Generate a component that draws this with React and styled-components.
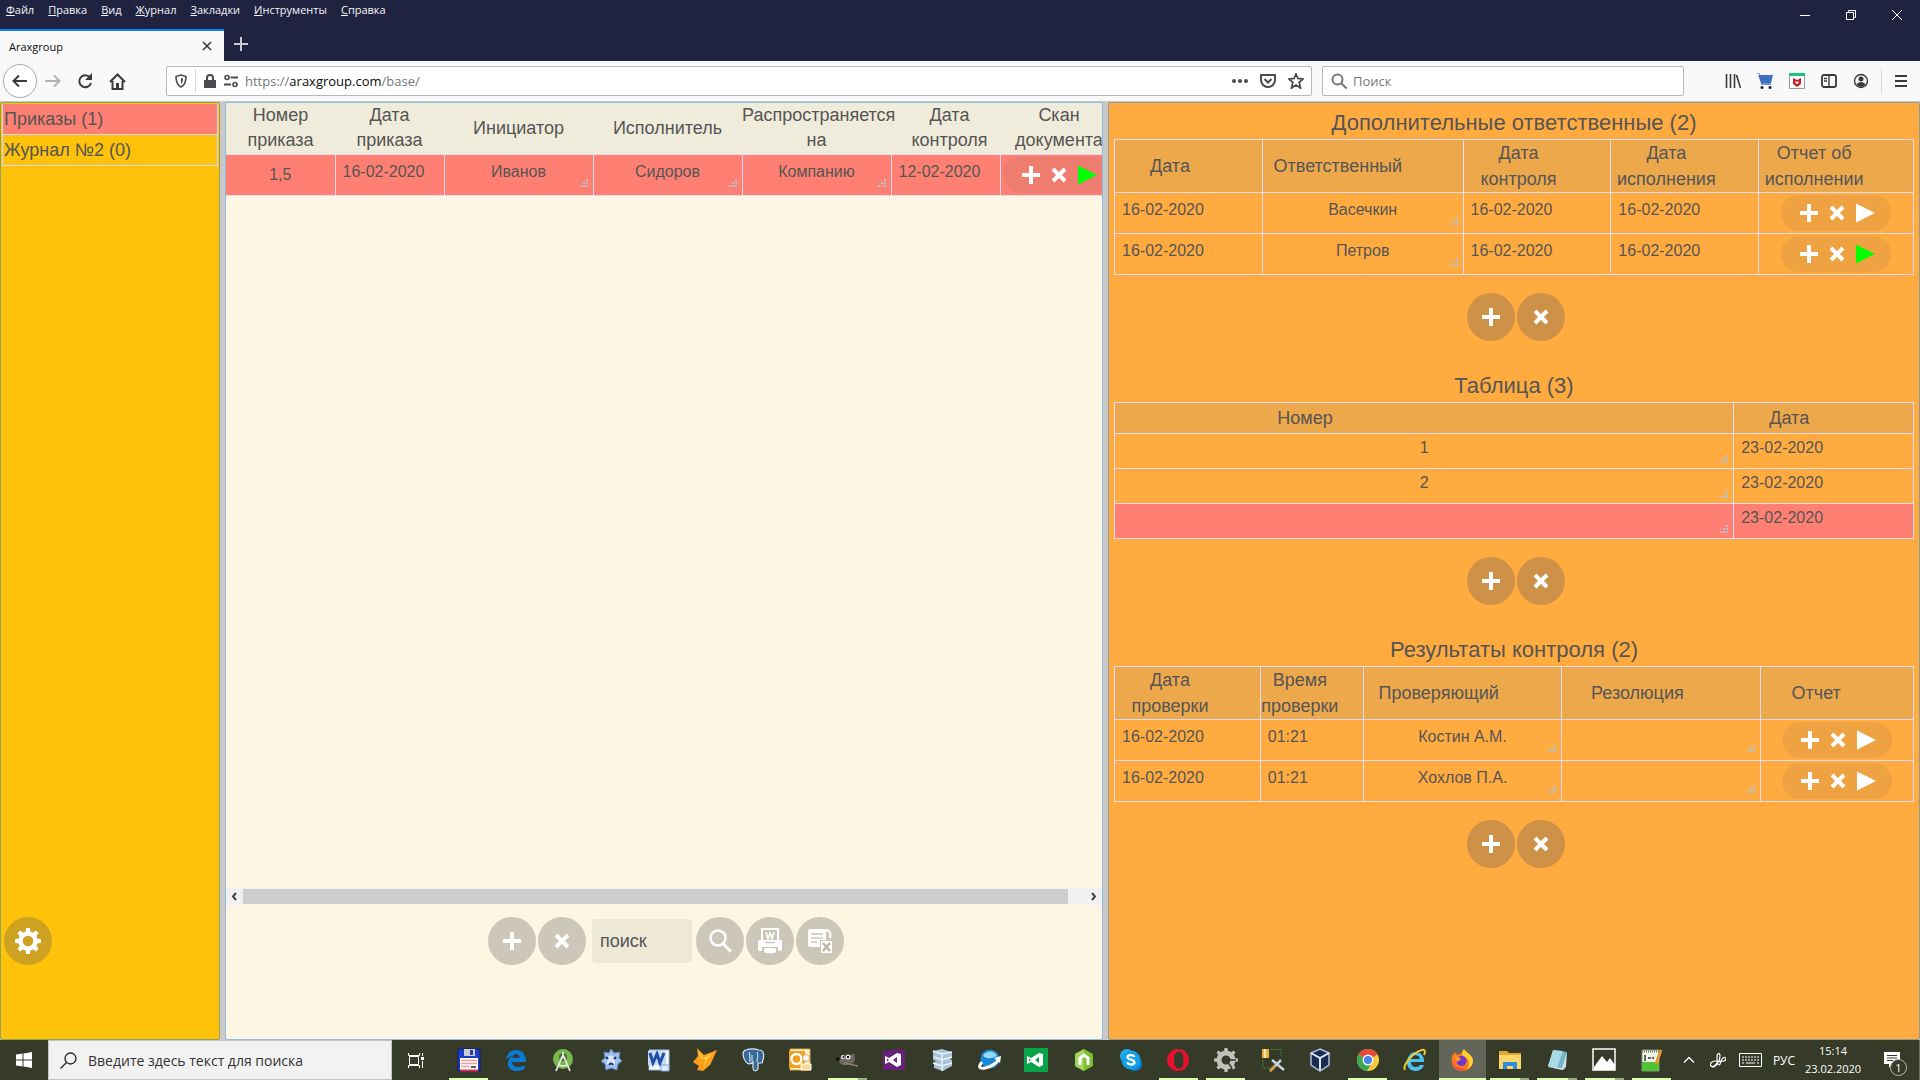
import React from 'react';
import styled, { createGlobalStyle } from 'styled-components';

const orders = [
  { number: '1,5', date: '16-02-2020', initiator: 'Иванов', executor: 'Сидоров', scope: 'Компанию', control: '12-02-2020' },
];

const responsible = [
  { date: '16-02-2020', name: 'Васечкин', control: '16-02-2020', done: '16-02-2020', loaded: false },
  { date: '16-02-2020', name: 'Петров', control: '16-02-2020', done: '16-02-2020', loaded: true },
];

const numbers = [
  { number: '1', date: '23-02-2020' },
  { number: '2', date: '23-02-2020' },
  { number: '', date: '23-02-2020', selected: true },
];

const checks = [
  { date: '16-02-2020', time: '01:21', inspector: 'Костин А.М.', resolution: '' },
  { date: '16-02-2020', time: '01:21', inspector: 'Хохлов П.А.', resolution: '' },
];

const menu = ['Файл', 'Правка', 'Вид', 'Журнал', 'Закладки', 'Инструменты', 'Справка'];

/* ---------- icons ---------- */

const Svg = ({ size = 24, box = 24, children }) => (
  <svg width={size} height={size} viewBox={`0 0 ${box} ${box}`} fill="none" aria-hidden="true">
    {children}
  </svg>
);

const PlusIcon = () => (
  <Svg size={20} box={20}><path d="M10 1v18M1 10h18" stroke="#fff" strokeWidth="4" /></Svg>
);

const CrossIcon = () => (
  <Svg size={16} box={16}><path d="M2 2l12 12M14 2L2 14" stroke="#fff" strokeWidth="4" /></Svg>
);

const PlayIcon = ({ loaded }) => (
  <Svg size={20} box={20}><path d="M1 0.500L20 10L1 19.500Z" fill={loaded ? '#00ff00' : '#fff'} /></Svg>
);

const GearIcon = () => (
  <Svg size={28} box={28}>
    <circle cx="14" cy="14" r="7.500" stroke="#fff" strokeWidth="4.500" />
    {[0, 45, 90, 135, 180, 225, 270, 315].map((a) => (
      <path key={a} d="M11.500 5.500L12 1h4l.5 4.500z" fill="#fff" transform={`rotate(${a} 14 14)`} />
    ))}
  </Svg>
);

const FindIcon = () => (
  <Svg size={24}>
    <circle cx="10" cy="9" r="7.500" stroke="#fff" strokeWidth="2.500" />
    <path d="M15 14.500l8 8" stroke="#fff" strokeWidth="3" />
  </Svg>
);

const PrintIcon = () => (
  <Svg size={26} box={26}>
    <path d="M5 12V1h16v11" stroke="#fff" strokeWidth="2" />
    <path d="M9 4l2 7 2-6 2 6 2-7" stroke="#fff" strokeWidth="1.500" />
    <path d="M3 12h20a2 2 0 0 1 2 2v7a2 2 0 0 1-2 2h-2v-4H5v4H3a2 2 0 0 1-2-2v-7a2 2 0 0 1 2-2z" fill="#fff" />
    <path d="M8 14.500h10" stroke="#cdc7b9" strokeWidth="1.500" />
    <rect x="7" y="20" width="12" height="5" rx="2" fill="#fff" />
  </Svg>
);

const SheetIcon = () => (
  <Svg size={26} box={26}>
    <path d="M3 1h14l2 2v9h-6v7H3a2 2 0 0 1-2-2V3a2 2 0 0 1 2-2z" fill="#fff" />
    <path d="M18 2c5 0 6 3 5 8" stroke="#fff" strokeWidth="2" />
    <path d="M4 6h12M4 10h12M4 14h6" stroke="#cdc7b9" strokeWidth="1.500" />
    <rect x="14" y="13" width="11" height="12" rx="1" fill="#fff" />
    <path d="M16 15l7 8M23 15l-7 8" stroke="#b9b3a6" strokeWidth="2.500" />
  </Svg>
);

const Grip = styled.svg`
  position: absolute;
  right: 4px;
  bottom: ${(p) => (p.$low ? 4 : 7)}px;
  pointer-events: none;
`;

const ResizeGrip = ({ low }) => (
  <Grip $low={low} width="9" height="9" viewBox="0 0 9 9" fill="#b9c0c4" aria-hidden="true">
    <path d="M6 0h2v2H6zM3 3h2v2H3zM6 3h2v2H6zM0 6h2v2H0zM3 6h2v2H3zM6 6h2v2H6z" />
  </Grip>
);

const Arrow = ({ flip }) => (
  <Svg size={9} box={9}><path d={flip ? 'M3 1l3 3.500L3 8' : 'M6 1L3 4.500L6 8'} stroke="#444" strokeWidth="2" /></Svg>
);

/* ---------- taskbar icons ---------- */

const apps = [
  {
    name: 'Total Commander', open: true,
    art: (
      <>
        <path d="M1 1h21l1 1v21H1z" fill="#1c3ec4" stroke="#0d1f86" />
        <path d="M7 1h11v7H7z" fill="#c8cdd6" /><path d="M13 2h3v5h-3z" fill="#2a3f9c" />
        <path d="M3 10h18v13H3z" fill="#fff" />
        <path d="M4 12.500h16M4 15.500h16M4 18.500h9" stroke="#f29b9b" strokeWidth="1.500" />
        <path d="M3 21.500h18v2H3z" fill="#d83050" /><path d="M14 18h5v2h-5z" fill="#555" />
      </>
    ),
  },
  {
    name: 'Edge',
    art: <path d="M2 12C3 5 7 2 12.500 2 19 2 22 7 22 14H8c.3 4 3 5 6.500 5 2.500 0 4.500-.8 6-1.700V21c-2 1.300-4.500 2-7.500 2C6.500 23 3.500 19 4 14.500c.3-3 2-5 4.500-6.200C5.500 8.500 3.300 10 2 12zm6.200-2.200h7.600C15.500 7.500 14.500 6 12.300 6 10 6 8.700 7.500 8.200 9.800z" fill="#0a7cd8" />,
  },
  {
    name: 'Android Studio',
    art: (
      <>
        <circle cx="12" cy="11" r="10" fill="#78b84a" />
        <circle cx="12" cy="9" r="4" fill="#4b6b45" />
        <path d="M12 4v4M11 9L5 23M13 9L19 23M8 17q4 2 8 0" stroke="#e4e8e4" strokeWidth="1.800" />
        <circle cx="12" cy="9" r="1.800" fill="#e4e8e4" />
      </>
    ),
  },
  {
    name: 'SQL Server',
    art: (
      <>
        <path d="M12 1l3 4 6-1-1 6 3 3-4 3-1 6-6-2-5 2-1-6-4-3 4-3-1-6 5 1z" fill="#9fc0ee" stroke="#5d86c8" />
        <path d="M8 9q4-3 8 0v7q-4 3-8 0z" fill="#d6e5fb" />
        <path d="M7 9l2 2M17 9l-2 2M10 17q2-3 4 0" stroke="#17345f" strokeWidth="2" />
      </>
    ),
  },
  {
    name: 'Word',
    art: (
      <>
        <path d="M3 2h20v20H3z" fill="#f4f8ff" stroke="#9db9e2" /><path d="M2 3h18v14H2z" fill="#c4daf5" />
        <path d="M4 5l3 10 4-9 3 9 4-10" stroke="#1d4fa8" strokeWidth="3" />
        <path d="M15 17h8v6h-8z" fill="#dfeaf8" stroke="#7ea3d6" />
      </>
    ),
  },
  {
    name: 'FoxPro',
    art: (
      <>
        <path d="M4 0l7 7 13-5-4 9-3 6-7 6-6-1 2-4-6-4 5-6z" fill="#ff9d1c" />
        <path d="M5 2l5 8 10-5-6 7-3 8 1-9-5-1z" fill="#ffd23c" />
      </>
    ),
  },
  {
    name: 'PostgreSQL',
    art: (
      <>
        <path d="M5 2c5-2 10-1 13 0 5 0 6 5 3 13h-4v6c-2 3-5 2-5-1v-6c-2 2-5 3-7 0C1 8 1 3 5 2z" fill="#35699a" stroke="#dce6ee" strokeWidth="1.200" />
        <path d="M8 4c2 3 0 7 1 10M16 4c2 3 0 6 0 10M11 7v6" stroke="#cddbe6" strokeWidth="1.200" />
      </>
    ),
  },
  {
    name: 'Outlook',
    art: (
      <>
        <path d="M2 1h20v21H2z" fill="#fff3d6" stroke="#e0a437" /><path d="M1 3h16v17H1z" fill="#f0a01e" />
        <circle cx="8.500" cy="11" r="5" stroke="#fff" strokeWidth="2.500" />
        <circle cx="18" cy="10" r="3.500" fill="#fff" stroke="#e0a437" /><path d="M13 16h10v6H13z" fill="#fbd98e" stroke="#fff" />
      </>
    ),
  },
  {
    name: 'GIMP', open: true, many: true,
    art: (
      <>
        <path d="M2 11c3-3 6-1 9-1 3-2 6-5 9-4-1 5 1 7-2 9-5 3-11 3-13 0z" fill="#6d6961" />
        <circle cx="8" cy="9" r="2" fill="#f4f4f4" /><circle cx="13" cy="9" r="2.500" fill="#f4f4f4" />
        <circle cx="8.500" cy="9" r="1" fill="#111" /><circle cx="13" cy="9" r="1.200" fill="#111" />
        <circle cx="3" cy="11" r="2" fill="#111" /><path d="M9 15l14 3" stroke="#8d8064" strokeWidth="1.500" />
      </>
    ),
  },
  {
    name: 'Visual Studio',
    art: (
      <>
        <path d="M1 3l16-2 6 1v20H1z" fill="#68217a" />
        <path d="M3 8v8l4-2 8 5 4-2V6l-4-1-8 5zm2 2.500L7 12l-2 1.500zM15 9v6l-4-3z" fill="#fff" fillRule="evenodd" />
      </>
    ),
  },
  {
    name: 'Database',
    art: (
      <>
        <path d="M3 3l9-2 10 3v6l-2 1 2 1v6l-9 5-9-3v-6l2-1-3-1z" fill="#a9c4d6" />
        <path d="M3 3l9 3 10-2M4 9l8 3 10-3M3 15l9 3 10-3M12 6v5M12 12v5M12 18v5" stroke="#e9f3fa" strokeWidth="1.500" />
      </>
    ),
  },
  {
    name: 'Web Browser',
    art: (
      <>
        <circle cx="13" cy="11" r="9.500" fill="#1787d8" /><path d="M6 8c2-6 12-6 14 0-4 2-9 4-14 0z" fill="#9ad8fa" />
        <path d="M5 14c-4 5-3 7 3 6 6-1 12-5 14-9" stroke="#fff" strokeWidth="3" /><path d="M17 10l7-2-1 7z" fill="#fff" />
      </>
    ),
  },
  {
    name: 'Visual Studio Web',
    art: (
      <>
        <path d="M0 0h24v24H0z" fill="#08a447" />
        <path d="M3 8v8l4-2 8 5 4-2V6l-4-1-8 5zm2 2.500L7 12l-2 1.500zM15 9v6l-4-3z" fill="#fff" fillRule="evenodd" />
      </>
    ),
  },
  {
    name: 'Node.js',
    art: (
      <>
        <path d="M12 1l9 5v12l-9 5-9-5V6z" fill="#7bbd2e" /><path d="M12 1v22l-9-5V6z" fill="#a2d45c" />
        <path d="M8 17V10l4-3 4 3v7" stroke="#fff" strokeWidth="3" />
      </>
    ),
  },
  {
    name: 'Skype',
    art: (
      <>
        <circle cx="8" cy="8" r="7" fill="#22aef0" /><circle cx="16" cy="16" r="7" fill="#0a7ed0" />
        <circle cx="12" cy="12" r="9.500" fill="#13a0e6" />
        <path d="M15.500 9c-1-2.500-7-2.500-7 .3 0 3 7 1.700 7 5 0 3-6.500 3-7.300 0" stroke="#fff" strokeWidth="2.200" />
      </>
    ),
  },
  {
    name: 'Opera', open: true,
    art: (
      <path d="M12 1a11 11 0 1 0 0 22 11 11 0 0 0 0-22zm1 2.500c3 0 4.500 3.500 4.500 8.500s-1.500 8.500-4.500 8.500S8 17 8 12s2-8.500 5-8.500z" fill="#e8112d" fillRule="evenodd" />
    ),
  },
  {
    name: 'Настройка', open: true,
    art: (
      <>
        <circle cx="12" cy="12" r="7" stroke="#bfc2bb" strokeWidth="5" />
        {[0, 45, 90, 135, 180, 225, 270, 315].map((a) => (
          <path key={a} d="M10 4l.5-4h3l.5 4z" fill="#bfc2bb" transform={`rotate(${a} 12 12)`} />
        ))}
        <path d="M12 12l6 8M12 12h10" stroke="#34392a" strokeWidth="1.500" />
      </>
    ),
  },
  {
    name: 'Конструктор',
    art: (
      <>
        <path d="M1 1h7v9H1z" fill="#e8b240" /><path d="M3 1h2v9H3z" fill="#ffe8a0" />
        <path d="M10 1.500h10v8M2 12v8h8" stroke="#3d8a38" strokeDasharray="2 1" />
        <path d="M9 23L20 12M11 12l12 10" stroke="#c8d4de" strokeWidth="2.500" /><path d="M9 23l5-5" stroke="#d89838" strokeWidth="2.500" />
      </>
    ),
  },
  {
    name: 'VirtualBox',
    art: (
      <>
        <path d="M12 1l9 4v12l-9 6-9-6V5z" fill="#1b2c50" stroke="#a9bdd8" strokeWidth="1.500" />
        <path d="M3 5l9 5 9-5M12 10v12" stroke="#dce6f4" strokeWidth="2" />
      </>
    ),
  },
  {
    name: 'Chrome', open: true,
    art: (
      <>
        <circle cx="12" cy="12" r="11" fill="#f9cb3c" />
        <path d="M12 12L2.500 6.500A11 11 0 0 1 21.500 6.500z" fill="#e5493a" />
        <path d="M12 12L2.500 6.500A11 11 0 0 0 11 23l5.500-9z" fill="#3fa656" />
        <circle cx="12" cy="12" r="5.500" fill="#fff" /><circle cx="12" cy="12" r="4.200" fill="#4a86ee" />
      </>
    ),
  },
  {
    name: 'Internet Explorer',
    art: (
      <>
        <path d="M21 14H8c0 3 2 5 5 5 2 0 3-.7 4-2h4c-1.500 4-4.500 6-8.500 6C7 23 4 19 4 14S7.500 4 12.500 4 21.500 8 21 14zM8.200 11h8.600c-.3-2.500-2-3.700-4.300-3.700S8.500 8.500 8.200 11z" fill="#4cc2f1" fillRule="evenodd" />
        <path d="M2 22C-1 18 10 4 19 2c4-1 3 3 2 5" stroke="#f2c62f" strokeWidth="2" />
      </>
    ),
  },
  {
    name: 'Firefox', open: true, active: true,
    art: (
      <>
        <path d="M2 8l3-4 2 3 5-2c0-3 2-4 2-4 2 4 8 5 9 12 0 6-5 10-11 10S0 19 2 8z" fill="#ff7a1f" />
        <path d="M14 1c2 4 8 5 9 11 0 5-3 8-6 9 4-6 2-11-5-14 0-3 2-6 2-6z" fill="#ffd12e" />
        <path d="M2 11c1 9 9 11 14 10-5 3-13 1-14-10z" fill="#f0305e" />
        <circle cx="11.500" cy="13" r="5" fill="#6a35c9" /><path d="M5 9c3-1 4 1 7 2-3 0-3 3-5 3z" fill="#ff9b2c" />
      </>
    ),
  },
  {
    name: 'Проводник', open: true, many: true,
    art: (
      <>
        <path d="M1 3h8l2 2h12v6H1z" fill="#e0a92f" /><path d="M1 7h22v14H1z" fill="#fcd66b" />
        <path d="M5 21v-7h14v7h-4v-3H9v3z" fill="#2d8ee0" />
      </>
    ),
  },
  {
    name: 'Блокнот', open: true, many: true,
    art: (
      <>
        <path d="M8 2l14 2-4 18-15-3z" fill="#74b6c9" /><path d="M8 2l10 1-6 17-9-2z" fill="#a9dbe6" />
        <path d="M22 4l-1 15-3 3-15-3 14 1z" fill="#d7dee0" />
      </>
    ),
  },
  {
    name: 'Фотографии', open: true, many: true,
    art: (
      <>
        <path d="M1 1h22v21H1z" stroke="#fff" strokeWidth="1.500" />
        <path d="M2 19l8-11 5 6 3-4 5 7v5H2z" fill="#fff" />
      </>
    ),
  },
  {
    name: 'Notepad++', open: true,
    art: (
      <>
        <path d="M3 2h17v21H3z" fill="#eef5e4" stroke="#8a9485" /><path d="M3 14h17v9H3z" fill="#52c234" />
        <path d="M3 3.500h17" stroke="#6b7466" strokeWidth="2" strokeDasharray="1 1" />
        <path d="M6 7v6M9 10h3M13 10h2" stroke="#333" strokeWidth="1.500" /><path d="M22 2l-5 14" stroke="#e8952e" strokeWidth="3" />
      </>
    ),
  },
];

/* ---------- browser chrome ---------- */

const Browser = () => (
  <>
    <TitleBar>
      <MenuBar>
        {menu.map((m) => (
          <MenuItem key={m} type="button"><u>{m[0]}</u>{m.slice(1)}</MenuItem>
        ))}
      </MenuBar>
      <WindowButtons>
        <WindowButton type="button" aria-label="Свернуть">
          <Svg size={12} box={12}><path d="M1 6.500h10" stroke="#fff" /></Svg>
        </WindowButton>
        <WindowButton type="button" aria-label="Восстановить">
          <Svg size={12} box={12}><path d="M1.500 3.500h7v7h-7zM3.500 3.500v-2h7v7h-2" stroke="#fff" /></Svg>
        </WindowButton>
        <WindowButton type="button" aria-label="Закрыть">
          <Svg size={12} box={12}><path d="M1 1l10 10M11 1L1 11" stroke="#fff" /></Svg>
        </WindowButton>
      </WindowButtons>
    </TitleBar>
    <TabStrip>
      <Tab>
        <span>Araxgroup</span>
        <IconButton type="button" aria-label="Закрыть вкладку" $w={16}>
          <Svg size={10} box={10}><path d="M1 1l8 8M9 1L1 9" stroke="#333" strokeWidth="1.500" /></Svg>
        </IconButton>
      </Tab>
      <IconButton type="button" aria-label="Новая вкладка" $w={34}>
        <Svg size={14} box={14}><path d="M7 0v14M0 7h14" stroke="#c9c9d2" strokeWidth="2" /></Svg>
      </IconButton>
    </TabStrip>
    <Toolbar>
      <BackButton type="button" aria-label="Назад">
        <Svg size={18} box={18}><path d="M16 9H3M8 3.500L2.500 9L8 14.500" stroke="#3a3a3e" strokeWidth="2" /></Svg>
      </BackButton>
      <IconButton type="button" aria-label="Вперёд" $w={32}>
        <Svg size={18} box={18}><path d="M1 9h14M10 3.500L15.500 9L10 14.500" stroke="#b4b4b6" strokeWidth="2" /></Svg>
      </IconButton>
      <IconButton type="button" aria-label="Обновить" $w={32}>
        <Svg size={16} box={16}>
          <path d="M13 4.500A6 6 0 1 0 14 10" stroke="#3a3a3e" strokeWidth="2" /><path d="M15 0v7H8z" fill="#3a3a3e" />
        </Svg>
      </IconButton>
      <IconButton type="button" aria-label="Домой" $w={32}>
        <Svg size={17} box={17}>
          <path d="M1 9l7.500-7.500L16 9M3.500 8v8h10V8" stroke="#3a3a3e" strokeWidth="2" />
          <path d="M7 10h3v6H7z" fill="#3a3a3e" />
        </Svg>
      </IconButton>
      <UrlBar>
        <Svg size={14} box={14}>
          <path d="M7 1l5 1.500c0 5-1 8.500-5 10.500C3 11 2 7.500 2 2.500z" stroke="#4a4a4f" strokeWidth="1.600" />
          <path d="M7 4v6c1.500-1 2-3 2-5.500z" fill="#4a4a4f" />
        </Svg>
        <Divider />
        <Svg size={14} box={14}>
          <path d="M1 6h12v8H1z" fill="#4a4a4f" /><path d="M4 7V4a3 3 0 0 1 6 0v3" stroke="#4a4a4f" strokeWidth="2" />
        </Svg>
        <Svg size={14} box={14}>
          <circle cx="3" cy="3.500" r="2" stroke="#4a4a4f" strokeWidth="1.600" /><path d="M6.500 3.500H14M0 10.500h7" stroke="#4a4a4f" strokeWidth="2" />
          <circle cx="11" cy="10.500" r="2" stroke="#4a4a4f" strokeWidth="1.600" />
        </Svg>
        <Address href="#base">https://<b>araxgroup.com</b>/base/</Address>
        <Svg size={16} box={16}>
          <circle cx="2" cy="8" r="2" fill="#4a4a4f" /><circle cx="8" cy="8" r="2" fill="#4a4a4f" /><circle cx="14" cy="8" r="2" fill="#4a4a4f" />
        </Svg>
        <Svg size={16} box={16}>
          <path d="M1 2h14v5a7 7 0 0 1-14 0z" stroke="#4a4a4f" strokeWidth="2" strokeLinejoin="round" />
          <path d="M4.500 6L8 9.500L11.500 6" stroke="#4a4a4f" strokeWidth="2" />
        </Svg>
        <Svg size={16} box={16}>
          <path d="M8 1l2 4.500 5 .5-3.800 3.400L12.500 15 8 12l-4.500 3 1.300-5.600L1 6l5-.5z" stroke="#4a4a4f" strokeWidth="1.800" />
        </Svg>
      </UrlBar>
      <SearchBar>
        <Svg size={16} box={16}>
          <circle cx="6.500" cy="6.500" r="5" stroke="#77777b" strokeWidth="2" /><path d="M10 10l5.500 5.500" stroke="#77777b" strokeWidth="2" />
        </Svg>
        <SearchInput aria-label="Поиск в интернете" placeholder="Поиск" />
      </SearchBar>
      <Extensions>
        <IconButton type="button" aria-label="Библиотека" $w={32}>
          <Svg size={16} box={16}><path d="M1.500 1v14M5.500 1v14M9.500 1v14M11.500 2l4 13" stroke="#3a3a3e" strokeWidth="1.600" /></Svg>
        </IconButton>
        <IconButton type="button" aria-label="Покупки" $w={32}>
          <Svg size={18} box={18}>
            <path d="M0 1h3l1 2h13l-2 8H6L3 2" fill="#3f6fc0" /><path d="M3 3l3 9h9" stroke="#3f6fc0" strokeWidth="1.500" />
            <circle cx="6" cy="15.500" r="1.500" fill="#222" /><circle cx="14" cy="15.500" r="1.500" fill="#222" />
          </Svg>
        </IconButton>
        <IconButton type="button" aria-label="WebAdvisor" $w={32}>
          <Svg size={16} box={16}>
            <path d="M.5.500h15v15H.5z" fill="#fff" stroke="#999" /><path d="M0 0h16v3H0z" fill="#18c77c" />
            <path d="M4 5l4 2 4-2v6l-4 3-4-3zM6.500 8v2l1.500 1 1.500-1V8L8 9z" fill="#c8202c" fillRule="evenodd" />
          </Svg>
        </IconButton>
        <IconButton type="button" aria-label="Боковая панель" $w={32}>
          <Svg size={16} box={16}>
            <rect x="1" y="2" width="14" height="12" rx="2" stroke="#3a3a3e" strokeWidth="1.800" />
            <path d="M8 2v12M3 5.500h3M3 8h3" stroke="#3a3a3e" strokeWidth="1.400" />
          </Svg>
        </IconButton>
        <IconButton type="button" aria-label="Учётная запись" $w={32}>
          <Svg size={16} box={16}>
            <circle cx="8" cy="8" r="6.500" stroke="#3a3a3e" strokeWidth="1.400" /><circle cx="8" cy="6" r="2.500" fill="#3a3a3e" />
            <path d="M3.500 11q4.500-4 9 0-2 3-4.500 3t-4.500-3z" fill="#3a3a3e" />
          </Svg>
        </IconButton>
        <Divider />
        <IconButton type="button" aria-label="Меню" $w={38}>
          <Svg size={14} box={14}><path d="M1 2h12M1 7h12M1 12h12" stroke="#3a3a3e" strokeWidth="2" /></Svg>
        </IconButton>
      </Extensions>
    </Toolbar>
  </>
);

/* ---------- page ---------- */

const TextCell = ({ label, value, low }) => (
  <td>
    <CellBox $low={low}>
      <CellText aria-label={label} defaultValue={value} rows={1} $low={low} />
      <ResizeGrip low={low} />
    </CellBox>
  </td>
);

const InputCell = ({ label, value, low }) => (
  <td>
    <CellBox $low={low}>
      <CellInput aria-label={label} defaultValue={value} $low={low} />
    </CellBox>
  </td>
);

const FileCell = ({ loaded, start }) => (
  <td>
    <FileBox $start={start}>
      <Pill>
        <PillButton type="button" aria-label="Добавить файл"><PlusIcon /></PillButton>
        <PillButton type="button" aria-label="Удалить файл"><CrossIcon /></PillButton>
        <PillButton type="button" aria-label="Открыть файл"><PlayIcon loaded={loaded} /></PillButton>
      </Pill>
    </FileBox>
  </td>
);

const RowButtons = () => (
  <Buttons>
    <RoundButton type="button" aria-label="Добавить строку"><PlusIcon /></RoundButton>
    <RoundButton type="button" aria-label="Удалить строку"><CrossIcon /></RoundButton>
  </Buttons>
);

// heads: [title, label width, share of the table width]
const SideTable = ({ title, heads, children }) => (
  <section>
    <SectionTitle>{title}</SectionTitle>
    <Table>
      <thead>
        <tr>
          {heads.map(([text, label, share]) => (
            <HeadCell key={text} $share={share}><HeadLabel $w={label}>{text}</HeadLabel></HeadCell>
          ))}
        </tr>
      </thead>
      <tbody>{children}</tbody>
    </Table>
    <RowButtons />
  </section>
);

const App = () => (
  <Screen>
    <GlobalStyle />
    <Browser />
    <Page>
      <Journals>
        <JournalList>
          <li><Journal type="button" $selected>Приказы (1)</Journal></li>
          <li><Journal type="button">Журнал №2 (0)</Journal></li>
        </JournalList>
        <RoundButton type="button" aria-label="Настройки"><GearIcon /></RoundButton>
      </Journals>
      <Orders>
        <OrdersScroll>
          <OrdersTable>
            <thead>
              <tr>
                <OrderHead $w={109}>Номер приказа</OrderHead>
                <OrderHead $w={109}>Дата приказа</OrderHead>
                <OrderHead $w={149}>Инициатор</OrderHead>
                <OrderHead $w={149}>Исполнитель</OrderHead>
                <OrderHead $w={149}>Распространяется на</OrderHead>
                <OrderHead $w={109} $pad={8}>Дата контроля</OrderHead>
                <OrderHead $w={118}>Скан документа</OrderHead>
              </tr>
            </thead>
            <tbody>
              {orders.map((o) => (
                <Row key={o.number} $selected>
                  <NumberCell>{o.number}</NumberCell>
                  <InputCell label="Дата приказа" value={o.date} />
                  <TextCell label="Инициатор" value={o.initiator} />
                  <TextCell label="Исполнитель" value={o.executor} />
                  <TextCell label="Распространяется на" value={o.scope} />
                  <InputCell label="Дата контроля" value={o.control} />
                  <FileCell loaded start />
                </Row>
              ))}
            </tbody>
          </OrdersTable>
        </OrdersScroll>
        <ScrollBar>
          <ScrollButton type="button" aria-label="Прокрутить влево"><Arrow /></ScrollButton>
          <ScrollTrack><ScrollThumb /></ScrollTrack>
          <ScrollButton type="button" aria-label="Прокрутить вправо"><Arrow flip /></ScrollButton>
        </ScrollBar>
        <OrderTools>
          <RoundButton type="button" aria-label="Добавить приказ"><PlusIcon /></RoundButton>
          <RoundButton type="button" aria-label="Удалить приказ"><CrossIcon /></RoundButton>
          <FindInput aria-label="поиск" placeholder="поиск" />
          <RoundButton type="button" aria-label="Найти"><FindIcon /></RoundButton>
          <RoundButton type="button" aria-label="Печать"><PrintIcon /></RoundButton>
          <RoundButton type="button" aria-label="Экспорт"><SheetIcon /></RoundButton>
        </OrderTools>
      </Orders>
      <Details>
        <SideTable
          title="Дополнительные ответственные (2)"
          heads={[['Дата', 110, 148], ['Ответственный', 150, 201], ['Дата контроля', 110, 148], ['Дата исполнения', 110, 148], ['Отчет об исполнении', 110, 155]]}
        >
          {responsible.map((r) => (
            <Row key={r.name}>
              <InputCell label="Дата" value={r.date} />
              <TextCell label="Ответственный" value={r.name} />
              <InputCell label="Дата контроля" value={r.control} />
              <InputCell label="Дата исполнения" value={r.done} />
              <FileCell loaded={r.loaded} />
            </Row>
          ))}
        </SideTable>
        <SideTable title="Таблица (3)" heads={[['Номер', 380, 620], ['Дата', 110, 180]]}>
          {numbers.map((n) => (
            <Row key={n.number} $selected={n.selected}>
              <TextCell label="Номер" value={n.number} low />
              <InputCell label="Дата" value={n.date} low />
            </Row>
          ))}
        </SideTable>
        <SideTable
          title="Результаты контроля (2)"
          heads={[['Дата проверки', 110, 146], ['Время проверки', 78, 103], ['Проверяющий', 150, 199], ['Резолюция', 150, 199], ['Отчет', 110, 153]]}
        >
          {checks.map((c) => (
            <Row key={c.inspector}>
              <InputCell label="Дата проверки" value={c.date} />
              <InputCell label="Время проверки" value={c.time} />
              <TextCell label="Проверяющий" value={c.inspector} />
              <TextCell label="Резолюция" value={c.resolution} />
              <FileCell />
            </Row>
          ))}
        </SideTable>
      </Details>
    </Page>
    <TaskBar>
      <TaskButton type="button" aria-label="Пуск" $w={48}>
        <Svg size={16} box={16}><path d="M0 2.500L6.500 1.500v6H0zM7.500 1.400L16 0v7.500H7.500zM0 8.500h6.500v6L0 13.500zM7.500 8.500H16V16l-8.500-1.400z" fill="#fff" /></Svg>
      </TaskButton>
      <TaskSearch>
        <Svg size={17} box={17}><circle cx="10.500" cy="6.500" r="5.500" stroke="#222" strokeWidth="1.300" /><path d="M6.500 10.500L.5 16.500" stroke="#222" strokeWidth="1.300" /></Svg>
        <TaskInput aria-label="Поиск в Windows" placeholder="Введите здесь текст для поиска" />
      </TaskSearch>
      <TaskButton type="button" aria-label="Представление задач" $w={48}>
        <Svg size={17} box={17}><path d="M1.500 4.500h9v8h-9zM.5 1v2.500h11V1M.5 16v-2.500h11V16M14.500 1v3M14.500 9v7" stroke="#fff" /><path d="M13 5h3v3h-3z" fill="#fff" /></Svg>
      </TaskButton>
      <AppList>
        {apps.map((a) => (
          <AppButton key={a.name} type="button" aria-label={a.name} $open={a.open} $many={a.many} $active={a.active}>
            <Svg size={24}>{a.art}</Svg>
          </AppButton>
        ))}
      </AppList>
      <Tray>
        <TaskButton type="button" aria-label="Скрытые значки" $w={28}>
          <Svg size={12} box={12}><path d="M1 8.500L6 3.500L11 8.500" stroke="#fff" strokeWidth="1.400" /></Svg>
        </TaskButton>
        <TaskButton type="button" aria-label="Перо" $w={30}>
          <Svg size={16} box={16}><path d="M2 15c4 0 8-6 8-11 0-4-3-3-3 1 0 3 0 8 2 8s1-5 4-7 4 2 1 3-6 0-9 0-6 3-4 5 6-2 7-5" stroke="#fff" strokeWidth="1.200" /></Svg>
        </TaskButton>
        <TaskButton type="button" aria-label="Клавиатура" $w={34}>
          <svg width="23" height="14" viewBox="0 0 23 14" fill="none" aria-hidden="true">
            <path d="M.5.500h22v13H.5z" stroke="#fff" /><path d="M3 4h17M3 7h17" stroke="#fff" strokeDasharray="2 1" /><path d="M3 10h2M7 10h9M18 10h2" stroke="#fff" />
          </svg>
        </TaskButton>
        <TaskButton type="button" $w={34}>РУС</TaskButton>
        <Clock type="button"><span>15:14</span><span>23.02.2020</span></Clock>
        <Notice type="button" aria-label="Уведомления">
          <Svg size={18} box={18}><path d="M1 1h16v12H9l-3 4v-4H1z" fill="#fff" /><path d="M4 4.500h10M4 7h10M4 9.500h6" stroke="#34392a" /></Svg>
          <Badge>1</Badge>
        </Notice>
      </Tray>
    </TaskBar>
  </Screen>
);

export default App;

/* ---------- styles ---------- */

const GlobalStyle = createGlobalStyle`
  * {
    box-sizing: border-box;
  }

  body {
    margin: 0;
    font-family: "Liberation Sans", Arial, sans-serif;
    color: #555;
  }

  button, input, textarea {
    margin: 0;
    padding: 0;
    border: 0;
    background: none;
    color: inherit;
    font: inherit;
    outline: none;
  }

  input {
    min-width: 0;
  }

  svg {
    flex: none;
    display: block;
  }
`;

const Screen = styled.div`
  display: flex;
  flex-direction: column;
  height: 100vh;
  overflow: hidden;
`;

const TitleBar = styled.header`
  display: flex;
  justify-content: space-between;
  height: 29px;
  background: #202340;
  color: #f4f4f8;
  font-family: "Open Sans", sans-serif;
  font-size: 11px;
`;

const MenuBar = styled.nav`
  display: flex;
  align-items: flex-start;
  gap: 14px;
  padding: 2px 6px;
`;

const MenuItem = styled.button`
  line-height: 16px;
`;

const WindowButtons = styled.div`
  display: flex;
`;

const WindowButton = styled.button`
  display: flex;
  justify-content: center;
  align-items: center;
  width: 46px;
  height: 29px;
`;

const TabStrip = styled.div`
  display: flex;
  height: 32px;
  background: #202340;
`;

const Tab = styled.div`
  display: flex;
  justify-content: space-between;
  align-items: center;
  width: 224px;
  padding: 0 9px;
  border-top: 2px solid #0a84ff;
  background: #f9f9fa;
  color: #0c0c0d;
  font-family: "Open Sans", sans-serif;
  font-size: 11px;
`;

const IconButton = styled.button`
  display: flex;
  justify-content: center;
  align-items: center;
  width: ${(p) => p.$w}px;
  height: 30px;
`;

const Toolbar = styled.div`
  display: flex;
  align-items: center;
  height: 41px;
  padding-left: 3px;
  border-bottom: 1px solid #c8c8c8;
  background: #f9f9fa;
  font-family: "Open Sans", sans-serif;
  font-size: 13px;
`;

const BackButton = styled(IconButton)`
  width: 34px;
  height: 34px;
  border: 1px solid #a9a9ac;
  border-radius: 50%;
  background: #fff;
`;

const UrlBar = styled.div`
  display: flex;
  flex: 1130;
  align-items: center;
  gap: 7px;
  height: 30px;
  margin-left: 33px;
  padding: 0 7px;
  border: 1px solid #b8b8bb;
  border-radius: 2px;
  background: #fff;

  > svg:nth-last-child(-n + 2) {
    margin-left: 5px;
  }
`;

const Divider = styled.span`
  width: 1px;
  height: 24px;
  background: #d7d7db;
`;

const Address = styled.a`
  flex: 1;
  color: #76767a;
  text-decoration: none;

  b {
    color: #0c0c0d;
    font-weight: 400;
  }
`;

const SearchBar = styled.div`
  display: flex;
  flex: 344;
  align-items: center;
  gap: 6px;
  height: 30px;
  margin-left: 10px;
  padding: 0 8px;
  border: 1px solid #b8b8bb;
  border-radius: 2px;
  background: #fff;
`;

const SearchInput = styled.input`
  flex: 1;

  &::placeholder {
    color: #77777b;
    opacity: 1;
  }
`;

const Extensions = styled.div`
  display: flex;
  align-items: center;
  margin-left: 33px;

  > span {
    margin-left: 4px;
  }
`;

const Page = styled.main`
  display: grid;
  flex: 1;
  grid-template-columns: 220fr 878fr 812fr;
  gap: 5px;
  min-height: 0;
  background: #c9c9cc;
`;

const Journals = styled.section`
  display: flex;
  flex-direction: column;
  justify-content: space-between;
  padding: 1px 1px 74px;
  border: 1px solid #8fa35a;
  border-radius: 2px;
  background: #ffc20a;

  > button {
    margin-left: 2px;
  }
`;

const JournalList = styled.ul`
  margin: 0;
  padding: 0;
  border: 1px solid #dcd6ee;
  border-width: 0 1px;
  list-style: none;
`;

const Journal = styled.button`
  display: block;
  width: 100%;
  height: 31px;
  padding-left: 1px;
  border-bottom: 1px solid #dcd6ee;
  background: ${(p) => (p.$selected ? '#ff8072' : 'transparent')};
  font-size: 18px;
  text-align: left;
`;

const Orders = styled.section`
  display: flex;
  flex-direction: column;
  min-width: 0;
  padding-bottom: 74px;
  border: 1px solid #8fbddc;
  border-radius: 2px;
  background: #fef6e2;
`;

const OrdersScroll = styled.div`
  flex: 1;
  overflow: hidden;
`;

const OrdersTable = styled.table`
  width: 892px;
  border-collapse: collapse;
  table-layout: fixed;
  font-size: 16px;

  td {
    padding: 0;
    border: 1px solid #e0dcf5;
    border-left-width: 0;
  }
`;

const OrderHead = styled.th`
  width: ${(p) => p.$w}px;
  height: 51px;
  padding: 0 0 0 ${(p) => p.$pad || 0}px;
  background: #f0ecdb;
  font-size: 18px;
  font-weight: 400;
  line-height: 25px;
`;

const Row = styled.tr`
  background: ${(p) => (p.$selected ? '#ff8072' : 'transparent')};
`;

const NumberCell = styled.td`
  text-align: center;
`;

const CellBox = styled.div`
  position: relative;
  height: ${(p) => (p.$low ? 34 : 40)}px;
`;

const CellInput = styled.input`
  display: block;
  width: 100%;
  height: ${(p) => (p.$low ? 28 : 34)}px;
  padding-left: 7px;
`;

const CellText = styled.textarea`
  display: block;
  width: 100%;
  height: 100%;
  padding-top: ${(p) => (p.$low ? 4 : 7)}px;
  line-height: 20px;
  text-align: center;
  resize: none;
  overflow: hidden;
`;

const FileBox = styled.div`
  display: flex;
  justify-content: ${(p) => (p.$start ? 'flex-start' : 'center')};
  align-items: center;
  height: 40px;
  padding-left: ${(p) => (p.$start ? 2 : 0)}px;
`;

const Pill = styled.div`
  display: flex;
  align-items: center;
  gap: 8px;
  width: 110px;
  height: 36px;
  padding-left: 18px;
  border-radius: 18px;
  background: rgba(90, 90, 90, 0.1);
`;

const PillButton = styled.button`
  display: flex;
  justify-content: center;
  width: 20px;
`;

const ScrollBar = styled.div`
  display: flex;
  height: 17px;
  background: #f1f1f1;
`;

const ScrollButton = styled.button`
  display: flex;
  justify-content: center;
  align-items: center;
  width: 17px;
`;

const ScrollTrack = styled.div`
  flex: 1;
  padding: 1px 0;
`;

const ScrollThumb = styled.div`
  width: 98%;
  height: 15px;
  background: #cdcdcd;
`;

const Buttons = styled.div`
  display: flex;
  justify-content: center;
  gap: 2px;
  padding: 18px 0 27px 4px;
`;

const OrderTools = styled(Buttons)`
  padding: 12px 0 0 4px;
`;

const RoundButton = styled.button`
  display: flex;
  justify-content: center;
  align-items: center;
  width: 48px;
  height: 48px;
  border-radius: 50%;
  background: rgba(90, 90, 90, 0.3);
`;

const FindInput = styled.input`
  width: 100px;
  height: 44px;
  margin: 2px 2px 0 4px;
  padding-left: 8px;
  border-radius: 4px;
  background: #eee8d6;
  font-size: 18px;

  &::placeholder {
    color: #555;
    opacity: 1;
  }
`;

const Details = styled.section`
  padding: 2px 5px 0;
  border: 1px solid #8f9a94;
  border-radius: 2px;
  background: #ffab3f;
  overflow: hidden;
`;

const SectionTitle = styled.h2`
  margin: 0;
  padding-top: 2px;
  font-size: 22px;
  font-weight: 400;
  line-height: 32px;
  text-align: center;
`;

const Table = styled.table`
  width: 100%;
  border-collapse: collapse;
  table-layout: fixed;
  font-size: 16px;

  th, td {
    padding: 0;
    border: 1px solid #e0dcf5;
  }
`;

const HeadCell = styled.th`
  width: ${(p) => p.$share / 8}%;
  height: 31px;
  background: #eda84c;
  font-size: 18px;
  font-weight: 400;
  line-height: 26px;
`;

const HeadLabel = styled.div`
  max-width: ${(p) => p.$w}px;
`;

const TaskBar = styled.footer`
  display: flex;
  height: 40px;
  background: #353a29;
  color: #fff;
  font-family: "Open Sans", sans-serif;
  font-size: 12px;
`;

const TaskButton = styled.button`
  display: flex;
  justify-content: center;
  align-items: center;
  width: ${(p) => p.$w}px;
`;

const TaskSearch = styled.div`
  display: flex;
  align-items: center;
  gap: 11px;
  width: 344px;
  padding: 0 11px;
  border: 1px solid #c4c4c4;
  background: #f2f2f2;
`;

const TaskInput = styled.input`
  flex: 1;
  font-size: 14px;

  &::placeholder {
    color: #333;
    opacity: 1;
  }
`;

const AppList = styled.div`
  display: flex;
  flex: 1;
  padding-left: 5px;
`;

const AppButton = styled.button`
  display: flex;
  flex: 1;
  justify-content: center;
  align-items: center;
  position: relative;
  background: ${(p) => (p.$active ? '#626659' : 'transparent')};

  &::after {
    content: "";
    display: ${(p) => (p.$open ? 'block' : 'none')};
    position: absolute;
    bottom: 0;
    left: ${(p) => (p.$active ? 0 : 4)}px;
    right: ${(p) => (p.$active ? 0 : 4)}px;
    height: 2px;
    background: ${(p) => (p.$many ? 'linear-gradient(90deg, #ddffae 78%, #9aae80 78%)' : '#ddffae')};
  }
`;

const Tray = styled.div`
  display: flex;
  width: 245px;
`;

const Clock = styled.button`
  display: flex;
  flex-direction: column;
  justify-content: center;
  align-items: center;
  width: 64px;
  font-size: 11px;
  line-height: 18px;
`;

const Notice = styled(TaskButton)`
  position: relative;
  width: 55px;
  border-right: 1px solid #6d7165;
`;

const Badge = styled.span`
  position: absolute;
  right: 12px;
  bottom: 4px;
  width: 17px;
  height: 17px;
  border: 1px solid #b9bbb4;
  border-radius: 50%;
  background: #34392a;
  font-size: 11px;
  line-height: 15px;
`;
